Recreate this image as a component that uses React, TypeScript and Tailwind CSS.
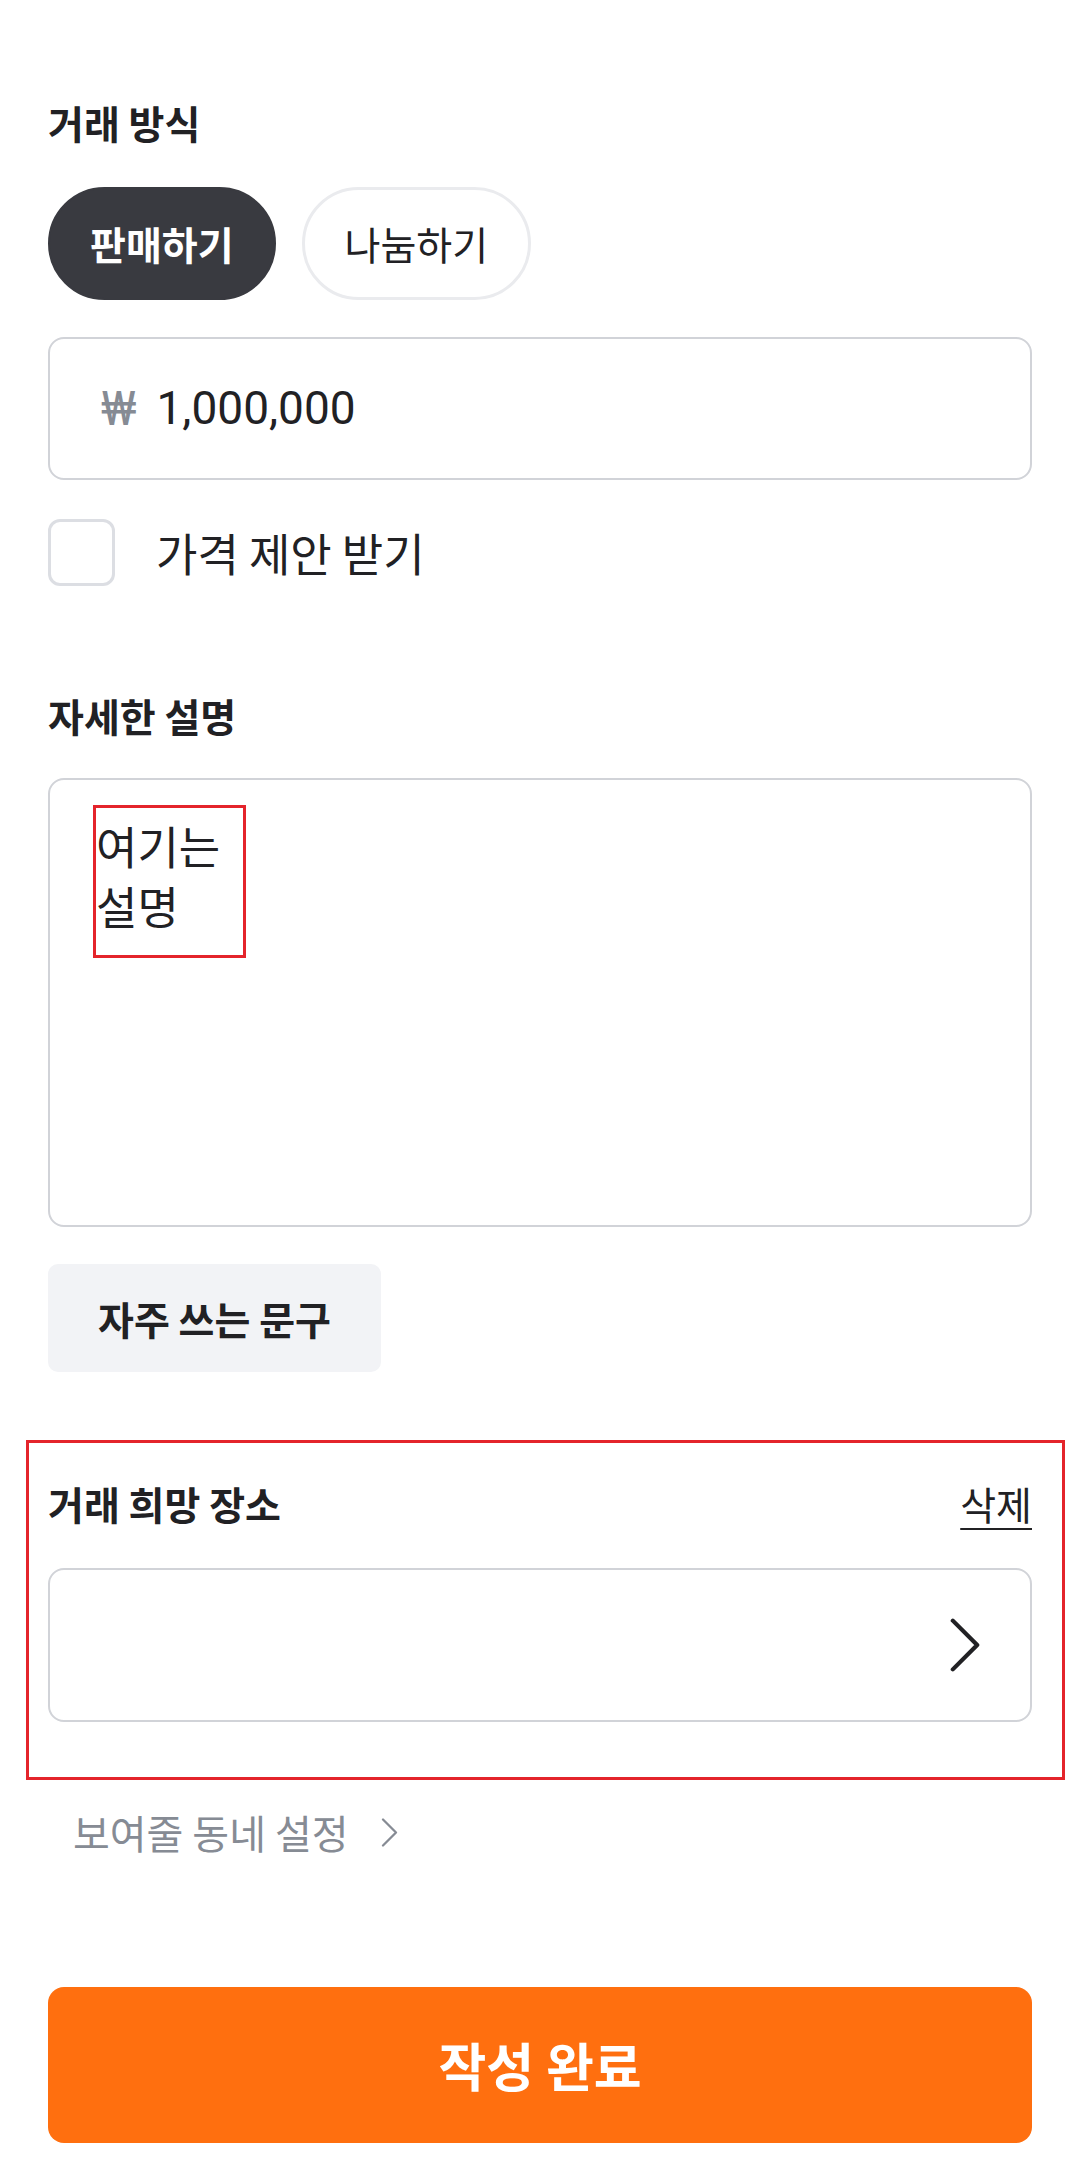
import React from "react";

const ChevronRight = ({ className }: { className?: string }) => (
  <svg className={className} viewBox="0 0 32 58" fill="none">
    <path d="M3 3 L29 29 L3 55" stroke="currentColor" strokeWidth="4.5" strokeLinecap="round" strokeLinejoin="round" />
  </svg>
);

export default function App() {
  return (
    <div className="w-[1080px] min-h-[2168px] bg-white px-[48px] text-[#212124] [font-family:'Noto_Sans_CJK_KR','Noto_Sans',sans-serif]">
      {/* 거래 방식 */}
      <div className="pt-[98px]">
        <h2 className="text-[39px] leading-[48px] font-bold">거래 방식</h2>
        <div className="mt-[41px] flex gap-[26px]">
          <button className="h-[113px] px-[40px] rounded-full bg-[#393a40] border-2 border-[#393a40] text-white text-[39px] font-bold">
            판매하기
          </button>
          <button className="h-[113px] px-[40px] rounded-full bg-white border-[3px] border-[#eaebee] text-[#212124] text-[39px]">
            나눔하기
          </button>
        </div>

        <div className="mt-[37px] h-[143px] rounded-[16px] border-2 border-[#d1d3d8] flex items-center pl-[51px] gap-[20px]">
          <span className="text-[48px] text-[#868b94] [font-family:Roboto,'Noto_Sans',sans-serif]">₩</span>
          <span className="text-[46px] [font-family:Roboto,'Noto_Sans',sans-serif]">1,000,000</span>
        </div>

        <div className="mt-[39px] flex items-center gap-[41px]">
          <div className="w-[67px] h-[67px] rounded-[12px] border-[3px] border-[#dcdee3] bg-white" />
          <span className="text-[45px] leading-[48px]">가격 제안 받기</span>
        </div>
      </div>

      {/* 자세한 설명 */}
      <div className="mt-[105px]">
        <h2 className="text-[39px] leading-[48px] font-bold">자세한 설명</h2>
        <div className="relative mt-[39px] h-[449px] rounded-[16px] border-2 border-[#d1d3d8] pl-[46px] pt-[36px]">
          <p className="text-[45px] leading-[60px]">
            여기는
            <br />
            설명
          </p>
          <div className="absolute left-[43px] top-[25px] w-[153px] h-[153px] border-[3px] border-[#e4242b]" />
        </div>
        <button className="mt-[37px] h-[108px] px-[50px] rounded-[10px] bg-[#f2f3f6] text-[39px] font-bold">
          자주 쓰는 문구
        </button>
      </div>

      {/* 거래 희망 장소 */}
      <div className="relative mt-[107px]">
        <div className="flex items-center justify-between h-[48px]">
          <h2 className="text-[39px] leading-[48px] font-bold">거래 희망 장소</h2>
          <span className="text-[39px] leading-[48px] underline decoration-2 underline-offset-[8px]">삭제</span>
        </div>
        <div className="mt-[41px] h-[154px] rounded-[16px] border-2 border-[#d1d3d8] flex items-center justify-end pr-[50px]">
          <ChevronRight className="w-[30px] h-[56px] text-[#212124]" />
        </div>
        <div className="absolute -left-[22px] -right-[33px] -top-[39px] -bottom-[58px] border-[3px] border-[#e4242b] pointer-events-none" />
      </div>

      <div className="mt-[86px] flex items-center gap-[32px] pl-[25px] text-[#868b94]">
        <span className="text-[40px] leading-[48px]">보여줄 동네 설정</span>
        <ChevronRight className="w-[17px] h-[29px]" />
      </div>

      <button className="mt-[131px] w-full h-[156px] rounded-[16px] bg-[#ff6f0f] text-white text-[52px] font-bold">
        작성 완료
      </button>
    </div>
  );
}
